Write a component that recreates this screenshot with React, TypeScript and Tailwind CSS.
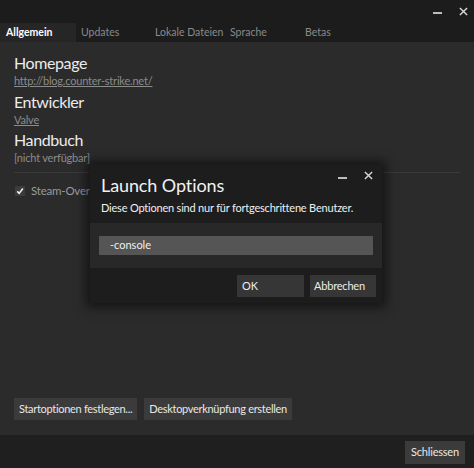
import React from "react";

const font = { fontFamily: 'Lato, "Open Sans", sans-serif' };

function Minus() {
  return <div className="w-[9px] h-[2px] bg-[#bdbdbd]" />;
}
function XIcon({ size = 9 }: { size?: number }) {
  return (
    <svg width={size} height={size} viewBox="0 0 10 10">
      <path d="M1 1 L9 9 M9 1 L1 9" stroke="#d8d8d8" strokeWidth="1.6" />
    </svg>
  );
}

export default function App() {
  return (
    <div className="relative w-[474px] h-[468px] bg-[#2b2b2b] text-[#e6e6e6] overflow-hidden flex flex-col" style={font}>
      {/* title bar */}
      <div className="h-[23px] bg-[#1c1c1c] flex items-center justify-end gap-[17px] pr-[6px]">
        <div className="mt-[3px]"><Minus /></div>
        <XIcon />
      </div>
      {/* tabs */}
      <div className="h-[19px] bg-[#1c1c1c] flex text-[10.5px] text-[#8a8a8a]">
        <div className="w-[76px] bg-[#262626] text-white font-bold pl-[6px] flex items-center">Allgemein</div>
        <div className="w-[79px] pl-[5px] flex items-center">Updates</div>
        <div className="w-[75px] flex items-center">Lokale Dateien</div>
        <div className="w-[75px] flex items-center">Sprache</div>
        <div className="flex items-center">Betas</div>
      </div>
      {/* content */}
      <div className="flex-1 flex flex-col px-[14px] pt-[11px]">
        <div className="text-[16px] leading-[20px] tracking-[-0.4px] text-[#ececec]">Homepage</div>
        <div className="text-[11px] leading-[16px] tracking-[-0.2px] text-[#8c8c8c] underline">http://blog.counter-strike.net/</div>
        <div className="text-[16px] leading-[20px] tracking-[-0.4px] text-[#ececec] mt-[3px]">Entwickler</div>
        <div className="text-[11px] leading-[16px] tracking-[-0.2px] text-[#8c8c8c] underline">Valve</div>
        <div className="text-[16px] leading-[20px] tracking-[-0.4px] text-[#ececec] mt-[2px]">Handbuch</div>
        <div className="text-[11px] leading-[16px] tracking-[-0.2px] text-[#8c8c8c]">[nicht verfügbar]</div>
        <div className="h-px bg-[#3a3a3a] mt-[6px]" />
        <div className="flex items-center gap-[6px] mt-[9px] pl-[1px]">
          <div className="w-[10px] h-[10px] bg-[#3c3c3c] flex items-center justify-center shrink-0">
            <svg width="8" height="8" viewBox="0 0 10 10">
              <path d="M1.5 5.5 L4 8 L8.5 2" stroke="#f0f0f0" strokeWidth="2" fill="none" />
            </svg>
          </div>
          <span className="whitespace-nowrap text-[11.5px] tracking-[-0.2px] text-[#9a9a9a]">Steam-Overlay während des Spiels aktivieren</span>
        </div>
        <div className="flex-1" />
        <div className="flex gap-[7px] mb-[15px]">
          <div className="h-[22px] px-[5px] bg-[#3b3b3b] text-[11px] tracking-[-0.3px] text-[#e8e8e8] flex items-center whitespace-nowrap">Startoptionen festlegen...</div>
          <div className="h-[22px] px-[5px] bg-[#3b3b3b] text-[11px] tracking-[-0.3px] text-[#e8e8e8] flex items-center whitespace-nowrap">Desktopverknüpfung erstellen</div>
        </div>
      </div>
      {/* footer */}
      <div className="h-[33px] bg-[#1f1f1f] flex items-start justify-end pr-[9px] pt-[6px]">
        <div className="h-[23px] w-[60px] bg-[#3b3b3b] text-[11px] tracking-[-0.2px] text-[#e8e8e8] flex items-center justify-center whitespace-nowrap">Schliessen</div>
      </div>

      {/* dialog */}
      <div className="absolute left-[90px] top-[165px] w-[292px] flex flex-col shadow-[0_0_10px_4px_rgba(0,0,0,0.55)]">
        <div className="relative h-[58px] bg-[#1d1d1d] pl-[11px] pt-[8px]">
          <div className="text-[18px] leading-[24px] tracking-[-0.1px] text-[#f2f2f2]">Launch Options</div>
          <div className="text-[11px] leading-[16px] tracking-[-0.2px] text-[#f0f0f0] mt-[3px] whitespace-nowrap">Diese Optionen sind nur für fortgeschrittene Benutzer.</div>
          <div className="absolute right-[9px] top-[6px] flex items-center gap-[17px]">
            <div className="mt-[4px]"><Minus /></div>
            <XIcon />
          </div>
        </div>
        <div className="h-[45px] bg-[#282828] flex items-center px-[9px]">
          <div className="h-[19px] w-full bg-[#555555] text-[11px] text-[#f0f0f0] flex items-center pl-[11px]">-console</div>
        </div>
        <div className="h-[35px] bg-[#1d1d1d] flex justify-end items-start pt-[7px] pr-[6px] gap-[6px]">
          <div className="w-[67px] h-[22px] bg-[#363636] text-[11px] text-[#ececec] flex items-center pl-[5px]">OK</div>
          <div className="w-[66px] h-[22px] bg-[#363636] text-[11px] tracking-[-0.2px] text-[#ececec] flex items-center pl-[4px]">Abbrechen</div>
        </div>
      </div>
    </div>
  );
}
